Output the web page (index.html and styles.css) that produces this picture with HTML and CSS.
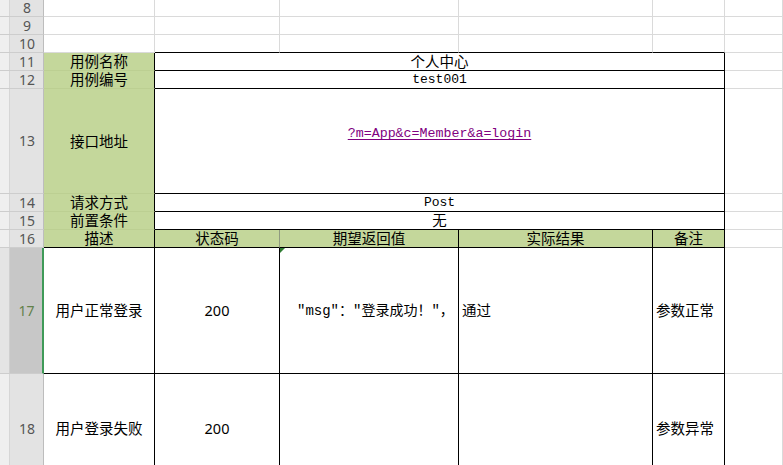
FILE: index.html
```html
<!DOCTYPE html>
<html lang="zh-CN">
<head>
<meta charset="utf-8">
<title>用例</title>
<link rel="stylesheet" href="styles.css">
</head>
<body>
<div class="sheet">
  <div class="rh">8</div><div class="c"></div><div class="c"></div><div class="c"></div><div class="c"></div><div class="c"></div><div class="c"></div>
  <div class="rh">9</div><div class="c"></div><div class="c"></div><div class="c"></div><div class="c"></div><div class="c"></div><div class="c"></div>
  <div class="rh">10</div><div class="c"></div><div class="c bb"></div><div class="c bb"></div><div class="c bb"></div><div class="c bb"></div><div class="c"></div>

  <div class="rh">11</div><div class="c g gb br lbl">用例名称</div><div class="c span4 br bb lbl">个人中心</div><div class="c"></div>
  <div class="rh">12</div><div class="c g gb br lbl">用例编号</div><div class="c span4 br bb mono">test001</div><div class="c"></div>
  <div class="rh">13</div><div class="c g gb br lbl">接口地址</div><div class="c span4 br bb mono link-cell"><span class="link">?m=App&amp;c=Member&amp;a=login</span></div><div class="c"></div>
  <div class="rh">14</div><div class="c g gb br lbl">请求方式</div><div class="c span4 br bb mono">Post</div><div class="c"></div>
  <div class="rh">15</div><div class="c g gb br lbl">前置条件</div><div class="c span4 br bb lbl">无</div><div class="c"></div>
  <div class="rh">16</div><div class="c g br bb lbl">描述</div><div class="c g bb soft-r lbl">状态码</div><div class="c g br bb lbl">期望返回值</div><div class="c g br bb lbl">实际结果</div><div class="c g br bb lbl">备注</div><div class="c"></div>

  <div class="rh rh-sel">17</div>
  <div class="c br bb body-t">用户正常登录</div>
  <div class="c br bb body-t">200</div>
  <div class="c br bb msg"><span class="flag"></span>"msg"："登录成功！"，</div>
  <div class="c br bb body-t left">通过</div>
  <div class="c br bb body-t left">参数正常</div>
  <div class="c"></div>

  <div class="rh">18</div>
  <div class="c br bb body-t">用户登录失败</div>
  <div class="c br bb body-t">200</div>
  <div class="c br bb"></div>
  <div class="c br bb"></div>
  <div class="c br bb body-t left">参数异常</div>
  <div class="c"></div>
</div>
</body>
</html>
```
FILE: styles.css
```css
html, body {
  margin: 0;
  padding: 0;
  background: #ffffff;
  overflow: hidden;
}

.sheet {
  display: grid;
  grid-template-columns: 44px 111px 125px 179px 194px 72px 1fr;
  grid-template-rows: 17px 18px 18px 18px 18px 105px 18px 18px 18px 126px 110px;
  width: 783px;
  height: 465px;
  overflow: hidden;
  font-family: "Noto Sans CJK SC", sans-serif;
  font-size: 14.5px;
  color: #000;
}

.rh {
  box-sizing: border-box;
  display: flex;
  align-items: center;
  justify-content: center;
  padding-left: 11px;
  background: linear-gradient(to right, #efefef 0 9px, #d6d6d6 9px 10px, #e3e3e3 10px);
  border-right: 1px solid #bdbdbd;
  border-bottom: 1px solid #cdcdcd;
  font-family: "Noto Sans", "Open Sans", sans-serif;
  font-size: 14px;
  color: #555555;
  line-height: 1;
}

.rh-sel {
  background: linear-gradient(to right, #e4e4e4 0 9px, #cfcfcf 9px 10px, #c7c7c7 10px);
  border-right: 2px solid #3f9a58;
  color: #62814a;
}

.c {
  box-sizing: border-box;
  border-right: 1px solid #dadada;
  border-bottom: 1px solid #dadada;
  display: flex;
  align-items: center;
  justify-content: center;
  line-height: 1;
  white-space: nowrap;
  min-width: 0;
}

.span4 { grid-column: span 4; }

.g { background: #c4d79b; }
.gb { border-bottom-color: #bccf92; }
.br { border-right-color: #000000; }
.bb { border-bottom-color: #000000; }
.soft-r { border-right-color: #8f9a80; }

.lbl {
  font-size: 14.5px;
}

.mono {
  font-family: "Liberation Mono", "Noto Sans CJK SC", monospace;
  font-size: 13px;
}

.link-cell {
  padding-bottom: 14px;
}

.link {
  color: #800080;
  text-decoration: underline;
  text-underline-offset: 2px;
  font-size: 13.3px;
}

.body-t {
  font-family: "Noto Sans", "Noto Sans CJK SC", sans-serif;
  font-size: 14.5px;
}

.left {
  justify-content: flex-start;
  padding-left: 3px;
}

.msg {
  position: relative;
  justify-content: flex-start;
  padding-left: 17px;
  font-family: "Liberation Mono", "Noto Sans CJK SC", monospace;
  font-size: 14px;
  overflow: hidden;
}

.flag {
  position: absolute;
  left: 0;
  top: 0;
  width: 0;
  height: 0;
  border-top: 5px solid #2f7d32;
  border-right: 5px solid transparent;
}
```
